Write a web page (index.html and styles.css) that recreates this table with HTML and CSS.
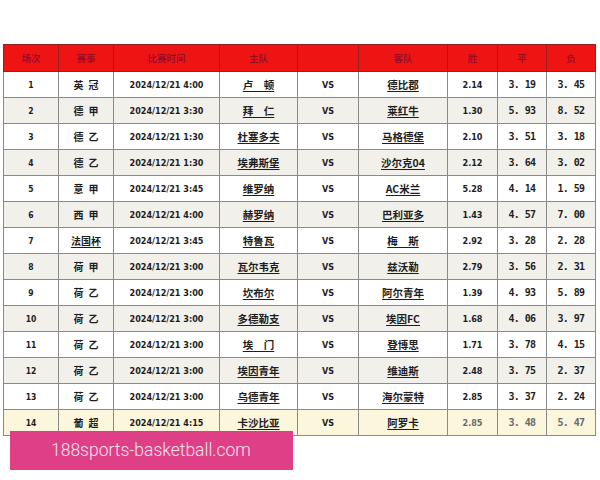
FILE: index.html
```html
<!DOCTYPE html>
<html lang="zh">
<head>
<meta charset="utf-8">
<title>赛事赔率</title>
<link rel="stylesheet" href="styles.css">
</head>
<body>
<div class="page">
  <div class="frame">
    <table class="odds">
      <colgroup>
        <col class="c-no"><col class="c-lg"><col class="c-time"><col class="c-home"><col class="c-vs"><col class="c-away"><col class="c-w"><col class="c-d"><col class="c-l">
      </colgroup>
      <thead>
        <tr><th>场次</th><th>赛事</th><th>比赛时间</th><th>主队</th><th></th><th>客队</th><th>胜</th><th>平</th><th>负</th></tr>
      </thead>
      <tbody>
        <tr><td class="no">1</td><td class="lg">英&ensp;冠</td><td class="tm">2024/12/21 4:00</td><td class="team"><u>卢　顿</u></td><td class="vs">VS</td><td class="team"><u>德比郡</u></td><td class="w">2.14</td><td class="m">3. 19</td><td class="m">3. 45</td></tr>
        <tr class="alt"><td class="no">2</td><td class="lg">德&ensp;甲</td><td class="tm">2024/12/21 3:30</td><td class="team"><u>拜　仁</u></td><td class="vs">VS</td><td class="team"><u>莱红牛</u></td><td class="w">1.30</td><td class="m">5. 93</td><td class="m">8. 52</td></tr>
        <tr><td class="no">3</td><td class="lg">德&ensp;乙</td><td class="tm">2024/12/21 1:30</td><td class="team"><u>杜塞多夫</u></td><td class="vs">VS</td><td class="team"><u>马格德堡</u></td><td class="w">2.10</td><td class="m">3. 51</td><td class="m">3. 18</td></tr>
        <tr class="alt"><td class="no">4</td><td class="lg">德&ensp;乙</td><td class="tm">2024/12/21 1:30</td><td class="team"><u>埃弗斯堡</u></td><td class="vs">VS</td><td class="team"><u>沙尔克04</u></td><td class="w">2.12</td><td class="m">3. 64</td><td class="m">3. 02</td></tr>
        <tr><td class="no">5</td><td class="lg">意&ensp;甲</td><td class="tm">2024/12/21 3:45</td><td class="team"><u>维罗纳</u></td><td class="vs">VS</td><td class="team"><u>AC米兰</u></td><td class="w">5.28</td><td class="m">4. 14</td><td class="m">1. 59</td></tr>
        <tr class="alt"><td class="no">6</td><td class="lg">西&ensp;甲</td><td class="tm">2024/12/21 4:00</td><td class="team"><u>赫罗纳</u></td><td class="vs">VS</td><td class="team"><u>巴利亚多</u></td><td class="w">1.43</td><td class="m">4. 57</td><td class="m">7. 00</td></tr>
        <tr><td class="no">7</td><td class="lg"><u>法国杯</u></td><td class="tm">2024/12/21 3:45</td><td class="team"><u>特鲁瓦</u></td><td class="vs">VS</td><td class="team"><u>梅　斯</u></td><td class="w">2.92</td><td class="m">3. 28</td><td class="m">2. 28</td></tr>
        <tr class="alt"><td class="no">8</td><td class="lg">荷&ensp;甲</td><td class="tm">2024/12/21 3:00</td><td class="team"><u>瓦尔韦克</u></td><td class="vs">VS</td><td class="team"><u>兹沃勒</u></td><td class="w">2.79</td><td class="m">3. 56</td><td class="m">2. 31</td></tr>
        <tr><td class="no">9</td><td class="lg">荷&ensp;乙</td><td class="tm">2024/12/21 3:00</td><td class="team"><u>坎布尔</u></td><td class="vs">VS</td><td class="team"><u>阿尔青年</u></td><td class="w">1.39</td><td class="m">4. 93</td><td class="m">5. 89</td></tr>
        <tr class="alt"><td class="no">10</td><td class="lg">荷&ensp;乙</td><td class="tm">2024/12/21 3:00</td><td class="team"><u>多德勒支</u></td><td class="vs">VS</td><td class="team"><u>埃因FC</u></td><td class="w">1.68</td><td class="m">4. 06</td><td class="m">3. 97</td></tr>
        <tr><td class="no">11</td><td class="lg">荷&ensp;乙</td><td class="tm">2024/12/21 3:00</td><td class="team"><u>埃　门</u></td><td class="vs">VS</td><td class="team"><u>登博思</u></td><td class="w">1.71</td><td class="m">3. 78</td><td class="m">4. 15</td></tr>
        <tr class="alt"><td class="no">12</td><td class="lg">荷&ensp;乙</td><td class="tm">2024/12/21 3:00</td><td class="team"><u>埃因青年</u></td><td class="vs">VS</td><td class="team"><u>维迪斯</u></td><td class="w">2.48</td><td class="m">3. 75</td><td class="m">2. 37</td></tr>
        <tr><td class="no">13</td><td class="lg">荷&ensp;乙</td><td class="tm">2024/12/21 3:00</td><td class="team"><u>乌德青年</u></td><td class="vs">VS</td><td class="team"><u>海尔蒙特</u></td><td class="w">2.85</td><td class="m">3. 37</td><td class="m">2. 24</td></tr>
        <tr class="hl"><td class="no">14</td><td class="lg">葡&ensp;超</td><td class="tm">2024/12/21 4:15</td><td class="team"><u>卡沙比亚</u></td><td class="vs">VS</td><td class="team"><u>阿罗卡</u></td><td class="w faded">2.85</td><td class="m faded">3. 48</td><td class="m faded">5. 47</td></tr>
      </tbody>
    </table>
  </div>
  <div class="banner">188sports-basketball.com</div>
</div>
</body>
</html>
```
FILE: styles.css
```css
html, body {
  margin: 0;
  padding: 0;
  background: #ffffff;
}

.page {
  position: relative;
  width: 600px;
  height: 480px;
  box-sizing: border-box;
  padding: 44px 0 0 3px;
  overflow: hidden;
  font-family: "DejaVu Sans Condensed", "DejaVu Sans", "Noto Sans CJK SC", sans-serif;
  color: #1e1e1e;
}

.frame {
  width: 594px;
  height: 392px;
  overflow: hidden;
}

.odds {
  border-collapse: collapse;
  table-layout: fixed;
  width: 593px;
  border: 1px solid #4a4a4a;
}

.c-no { width: 55px; }
.c-lg { width: 55px; }
.c-time { width: 106px; }
.c-home { width: 78px; }
.c-vs { width: 61px; }
.c-away { width: 89px; }
.c-w { width: 50px; }
.c-d { width: 49px; }
.c-l { width: 49px; }

.odds th,
.odds td {
  border: 1px solid #8a8a8a;
  padding: 0;
  text-align: center;
  vertical-align: middle;
  white-space: nowrap;
}

.odds th {
  height: 26px;
  background: #ee1414;
  color: #8e0c2a;
  font-family: "Noto Sans CJK SC", sans-serif;
  font-size: 9.5px;
  font-weight: 500;
  border-color: #9a2020;
}

.odds td {
  height: 25px;
  background: #ffffff;
  font-weight: 700;
}

.odds tr.alt td {
  background: #f1f0eb;
}

.odds tr.hl td {
  background: #fbf6dc;
}

.no {
  font-size: 8.5px;
}

.lg {
  font-family: "Noto Sans CJK SC", sans-serif;
  font-size: 10px;
}

.tm {
  font-size: 9px;
}

.team {
  font-family: "Noto Sans CJK SC", sans-serif;
  font-size: 10.5px;
}

.team u,
.lg u {
  text-decoration: underline;
  text-underline-offset: 2px;
}

.vs {
  font-size: 9px;
}

.w {
  font-size: 9px;
}

.m {
  font-family: "DejaVu Sans Mono", monospace;
  font-size: 10px;
  letter-spacing: -0.6px;
  padding-left: 6px;
}

.faded {
  color: #6a6a6a;
  font-weight: 400;
}

.banner {
  position: absolute;
  left: 10px;
  top: 431px;
  width: 283px;
  height: 39px;
  box-sizing: border-box;
  padding-left: 41px;
  background: #df3f87;
  color: #f7e3ec;
  font-family: Roboto, "Noto Sans", sans-serif;
  font-weight: 300;
  font-size: 17.5px;
  line-height: 39px;
}
```
